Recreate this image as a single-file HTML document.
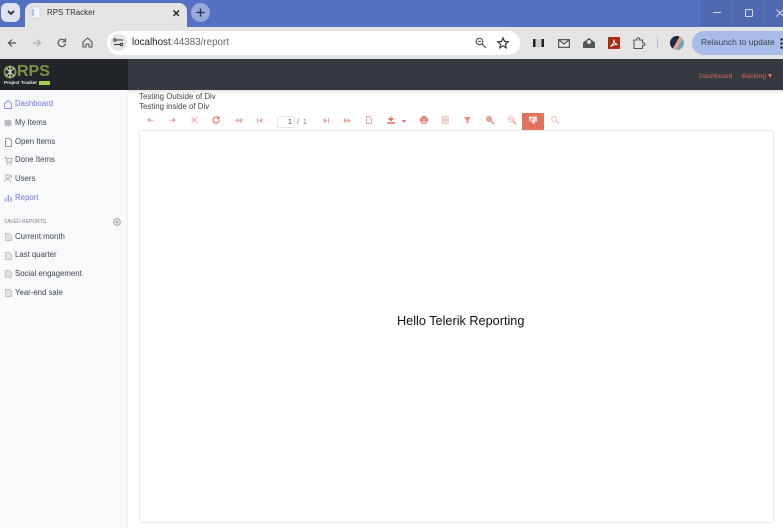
<!DOCTYPE html>
<html><head><meta charset="utf-8"><style>
html,body{margin:0;padding:0;background:#fff}
body{width:783px;height:528px;position:relative;overflow:hidden;font-family:"Liberation Sans",sans-serif}
#w{position:absolute;left:0;top:0;width:783px;height:528px;overflow:hidden;filter:blur(.35px)}
.a{position:absolute;white-space:nowrap}
.n{position:absolute;left:15px;font-size:7.8px;line-height:10px;color:#3f4650;white-space:nowrap}
.p{color:#6f74e8}
svg{position:absolute;overflow:visible}
</style></head><body><div id="w">
<!-- chrome -->
<div class="a" style="left:0;top:0;width:783px;height:27px;background:#5470c1"></div>
<div class="a" style="left:701px;top:0;width:82px;height:26px;background:#4f68b0"></div>
<div class="a" style="left:732px;top:0;width:1px;height:26px;background:#5d76bd"></div>
<div class="a" style="left:764px;top:0;width:1px;height:26px;background:#5d76bd"></div>
<div class="a" style="left:1px;top:3px;width:19px;height:19px;background:#dfe3f0;border-radius:6px"></div>
<svg style="left:7px;top:10px" width="8" height="6"><path d="M1 1l3 3 3-3" fill="none" stroke="#222" stroke-width="1.6"/></svg>
<div class="a" style="left:25px;top:3px;width:162px;height:24px;background:#e4e4e4;border-radius:8px 8px 0 0"></div>
<svg style="left:31px;top:7px" width="11" height="12"><rect x="0" y="0" width="9" height="11" fill="#f4f6fa" stroke="#c9d3e6"/><rect x="1" y="2" width="2" height="7" fill="#a9c4ea"/></svg>
<div class="a" style="left:47px;top:7px;font-size:7.9px;line-height:12px;color:#333">RPS TRacker</div>
<svg style="left:172px;top:9px" width="9" height="9"><path d="M1.500 1.500l5.500 5.500M7 1.500l-5.500 5.500" stroke="#222" stroke-width="1.400"/></svg>
<div class="a" style="left:191px;top:3px;width:19px;height:19px;background:#98a9da;border-radius:50%"></div>
<svg style="left:196px;top:8px" width="9" height="9"><path d="M4.500 .5v8M.5 4.500h8" stroke="#26304c" stroke-width="1.300"/></svg>
<div class="a" style="left:0;top:27px;width:783px;height:32px;background:#e4e4e4"></div>
<svg style="left:7px;top:38px" width="10" height="10"><path d="M9 5H1.500M5 1.500L1.500 5 5 8.500" fill="none" stroke="#555" stroke-width="1.200"/></svg>
<svg style="left:32px;top:38px" width="10" height="10"><path d="M1 5h7.500M5 1.500L8.500 5 5 8.500" fill="none" stroke="#aaa" stroke-width="1.200"/></svg>
<svg style="left:57px;top:38px" width="10" height="10"><path d="M8.500 5.500A3.700 3.700 0 1 1 7.500 2.300M8.500 .5v3h-3" fill="none" stroke="#555" stroke-width="1.200"/></svg>
<svg style="left:82px;top:37px" width="11" height="11"><path d="M1 5L5.500 1 10 5v5H7V7H4v3H1z" fill="none" stroke="#555" stroke-width="1.100"/></svg>
<div class="a" style="left:107px;top:31px;width:413px;height:24px;background:#fff;border-radius:12px"></div>
<div class="a" style="left:110px;top:34px;width:17px;height:17px;background:#e4e4e4;border-radius:50%"></div>
<svg style="left:113px;top:38px" width="11" height="9"><path d="M4 2h6M1 6.500h6" stroke="#333" stroke-width="1.100"/><circle cx="2" cy="2" r="1.300" fill="none" stroke="#333"/><circle cx="8.500" cy="6.500" r="1.300" fill="none" stroke="#333"/></svg>
<div class="a" style="left:132px;top:36px;font-size:9.8px;line-height:14px;color:#222">localhost<span style="color:#666">:44383/report</span></div>
<svg style="left:475px;top:37px" width="12" height="12"><circle cx="4.500" cy="4.500" r="3.300" fill="none" stroke="#555" stroke-width="1.200"/><path d="M7 7l4 4M3 4.500h3" stroke="#555" stroke-width="1.200"/></svg>
<svg style="left:497px;top:37px" width="12" height="12"><path d="M6 1l1.500 3.400 3.700.4-2.800 2.400.8 3.600L6 8.900l-3.200 1.900.8-3.600L.8 4.800l3.700-.4z" fill="none" stroke="#333" stroke-width="1.200"/></svg>
<div class="a" style="left:533px;top:39px;width:11px;height:8px;background:linear-gradient(90deg,#222 0 2.500px,#ccc 2.500px 8.500px,#222 8.500px)"></div>
<svg style="left:558px;top:39px" width="12" height="9"><path d="M.7.700h10.600v7.600H.7zM.7.700L6 5l5.300-4.300" fill="#eee" stroke="#444" stroke-width="1.100"/></svg>
<svg style="left:583px;top:37px" width="12" height="12"><path d="M0 5.500L6 1l6 4.500V11H0z" fill="#555"/><circle cx="6" cy="5" r="2" fill="#ddd"/></svg>
<div class="a" style="left:608px;top:37px;width:12px;height:12px;background:#ad2a12;border-radius:1px"></div>
<svg style="left:609px;top:38px" width="10" height="10"><path d="M1.500 8.500C4 6.500 5 3.500 5 1.500c0 3 1.500 4.500 3.500 5C6 6.500 3.500 7 1.500 8.500z" fill="none" stroke="#fff" stroke-width="1"/></svg>
<svg style="left:633px;top:37px" width="13" height="12"><path d="M1 3h3V1.500C4 .5 6.500 .5 6.500 1.500V3h3v3h1.500c1 0 1 2.500 0 2.500H9.500v3H1z" fill="none" stroke="#555" stroke-width="1.100"/></svg>
<div class="a" style="left:657px;top:37px;width:1px;height:11px;background:#aebbd8"></div>
<div class="a" style="left:670px;top:36px;width:14px;height:14px;border-radius:50%;background:linear-gradient(120deg,#1e2a44 0 45%,#d8a890 45% 65%,#6fa4b8 65%)"></div>
<div class="a" style="left:692px;top:31px;width:100px;height:24px;background:#a9bbe8;border-radius:12px"></div>
<div class="a" style="left:701px;top:36px;font-size:8.500px;line-height:13px;color:#3a4256">Relaunch to update</div>
<svg style="left:780px;top:38px" width="3" height="11"><circle cx="1.500" cy="1.500" r="1.200" fill="#222"/><circle cx="1.500" cy="5.500" r="1.200" fill="#222"/><circle cx="1.500" cy="9.500" r="1.200" fill="#222"/></svg>
<div class="a" style="left:713px;top:12px;width:8px;height:1px;background:#d5dcf0"></div>
<div class="a" style="left:745px;top:9px;width:6px;height:6px;border:1px solid #d5dcf0;border-radius:1px"></div>
<svg style="left:776px;top:9px" width="7" height="8"><path d="M.5.500l7 7M7.500.500l-7 7" stroke="#d5dcf0"/></svg>
<!-- app header -->
<div class="a" style="left:0;top:59px;width:783px;height:31px;background:#343a40"></div>
<div class="a" style="left:0;top:59px;width:128px;height:31px;background:#212529"></div>
<div class="a" style="left:0;top:90px;width:783px;height:4px;background:linear-gradient(#e2e2e2,#fff)"></div>
<svg style="left:3px;top:65px" width="14" height="14"><circle cx="7" cy="7" r="5.500" fill="none" stroke="#7d9248" stroke-width="2"/><path d="M3 3l8 8M11 3l-8 8M7 1v12" stroke="#d8dcd0" stroke-width="1.200"/></svg>
<div class="a" style="left:17px;top:63px;font-size:16px;line-height:18px;font-weight:bold;color:#7d9248">RPS</div>
<div class="a" style="left:4px;top:79px;font-size:4.600px;line-height:7px;font-weight:bold;color:#e8e8e8">Project Tracker</div>
<div class="a" style="left:39px;top:81px;width:11px;height:4px;background:#9fd048"></div>
<div class="a" style="left:699px;top:71.500px;font-size:6.800px;line-height:9px;color:#cf6a55">Dashboard</div>
<div class="a" style="left:742px;top:71.500px;font-size:6.800px;line-height:9px;color:#cf6a55">Backlog</div>
<div class="a" style="left:768px;top:73.500px;border:2.500px solid transparent;border-top:4px solid #e0705a;border-bottom:0"></div>
<!-- sidebar -->
<div class="a" style="left:0;top:90px;width:128px;height:438px;background:#f8f9fb;border-right:1px solid #eef0f3;box-sizing:border-box"></div>
<svg style="left:4px;top:100px" width="8" height="9"><path d="M.5 3.500L4 .5l3.500 3v5h-7z" fill="none" stroke="#8f94ee"/></svg>
<div class="n p" style="top:98.500px">Dashboard</div>
<svg style="left:4px;top:119px" width="8" height="8"><path d="M.5 1.500L4 .5l3.500 1v5L4 7.500.5 6.500z" fill="#b9bcc0"/></svg>
<div class="n" style="top:117.500px">My Items</div>
<svg style="left:5px;top:138px" width="7" height="9"><path d="M.5.500H4.500L6.500 2.500V8.500H.5z" fill="none" stroke="#999"/></svg>
<div class="n" style="top:136.500px">Open Items</div>
<svg style="left:4px;top:156px" width="9" height="9"><path d="M.5 1H2L3 6h4.500L8 2.500H2.500" fill="none" stroke="#aaa"/><circle cx="3.500" cy="7.800" r=".8" fill="#aaa"/><circle cx="7" cy="7.800" r=".8" fill="#aaa"/></svg>
<div class="n" style="top:154.500px">Done Items</div>
<svg style="left:4px;top:174px" width="9" height="8"><circle cx="3.500" cy="2.500" r="1.800" fill="none" stroke="#b0b0b0"/><path d="M.5 7.500c0-3 6-3 6 0M6 1c2 .5 2 2.500.5 3" fill="none" stroke="#b0b0b0"/></svg>
<div class="n" style="top:173.500px">Users</div>
<svg style="left:5px;top:194px" width="7" height="8"><path d="M.5 4v3.500M3.300 1v6.500M6 3v4.500" stroke="#8f94ee" stroke-width="1.300"/></svg>
<div class="n p" style="top:192.500px">Report</div>
<div class="a" style="left:4px;top:217.500px;font-size:5px;line-height:8px;color:#7a7f85">SAVED REPORTS</div>
<svg style="left:113px;top:217.500px" width="8" height="8"><circle cx="4" cy="4" r="3.300" fill="none" stroke="#888" stroke-width=".8"/><path d="M4 2.200v3.600M2.200 4h3.600" stroke="#888" stroke-width=".8"/></svg>
<svg style="left:5px;top:233px" width="7" height="8"><path d="M.5.500H4.500L6.500 2.500V7.500H.5z" fill="#e2e3e5" stroke="#b5b5b5" stroke-width=".7"/></svg>
<div class="n" style="top:232px">Current month</div>
<svg style="left:5px;top:252px" width="7" height="8"><path d="M.5.500H4.500L6.500 2.500V7.500H.5z" fill="#e2e3e5" stroke="#b5b5b5" stroke-width=".7"/></svg>
<div class="n" style="top:249.500px">Last quarter</div>
<svg style="left:5px;top:270px" width="7" height="8"><path d="M.5.500H4.500L6.500 2.500V7.500H.5z" fill="#e2e3e5" stroke="#b5b5b5" stroke-width=".7"/></svg>
<div class="n" style="top:268.500px">Social engagement</div>
<svg style="left:5px;top:289px" width="7" height="8"><path d="M.5.500H4.500L6.500 2.500V7.500H.5z" fill="#e2e3e5" stroke="#b5b5b5" stroke-width=".7"/></svg>
<div class="n" style="top:287.500px">Year-end sale</div>
<!-- content -->
<div class="a" style="left:139px;top:91.500px;font-size:7.900px;line-height:10px;color:#444">Testing Outside of Div</div>
<div class="a" style="left:139px;top:102px;font-size:7.900px;line-height:10px;color:#444">Testing inside of Div</div>
<!-- toolbar -->
<svg style="left:147px;top:117px" width="7" height="6"><path d="M7 4C5 2.500 3.500 2.500 3 2.500V.5L0 3l3 2.500V3.800c1.500 0 3 0 4 .2z" fill="#e8a598"/></svg>
<svg style="left:169px;top:117px" width="7" height="6"><path d="M0 4C2 2.500 3.500 2.500 4 2.500V.5L7 3 4 5.500V3.800c-1.500 0-3 0-4 .2z" fill="#e8a598"/></svg>
<svg style="left:191px;top:117px" width="6" height="6"><path d="M.5.500l5 5M5.500.500l-5 5" stroke="#e8a598"/></svg>
<svg style="left:212px;top:116px" width="8" height="8"><path d="M6.800 2.200A3.200 3.200 0 1 0 7.300 4.500M7 .5v2.200H4.800" fill="none" stroke="#df6f5c" stroke-width="1.100"/></svg>
<svg style="left:235px;top:118px" width="7" height="5"><path d="M3.500 0v5L0 2.500zM7 0v5L3.500 2.500z" fill="#eba99d"/></svg>
<svg style="left:257px;top:118px" width="6" height="5"><path d="M.5 0v5" stroke="#eba99d"/><path d="M5.500 0v5L1.500 2.500z" fill="#eba99d"/></svg>
<div class="a" style="left:277px;top:116px;width:16px;height:10px;border:1px solid #e6e6e6;border-radius:2px;box-sizing:content-box"></div>
<div class="a" style="left:288px;top:117.500px;font-size:7px;line-height:9px;color:#444">1</div>
<div class="a" style="left:297px;top:117.500px;font-size:7px;line-height:9px;color:#777">/&nbsp;&nbsp;1</div>
<svg style="left:323px;top:118px" width="6" height="5"><path d="M5.500 0v5" stroke="#eba99d"/><path d="M.5 0v5L4.500 2.500z" fill="#eba99d"/></svg>
<svg style="left:344px;top:118px" width="7" height="5"><path d="M0 0v5L3.500 2.500zM3.500 0v5L7 2.500z" fill="#eba99d"/></svg>
<svg style="left:366px;top:116px" width="6" height="8"><path d="M.5.500H3.500L5.500 2.500V7.500H.5z" fill="none" stroke="#eba99d"/></svg>
<svg style="left:387px;top:116px" width="8" height="8"><path d="M4 0v3.500M1.800 2.500L4 5l2.200-2.500z" fill="#df6f5c" stroke="#df6f5c" stroke-width=".8"/><path d="M0 7h8" stroke="#df6f5c" stroke-width="1.500"/></svg>
<div class="a" style="left:401.500px;top:120px;border:2px solid transparent;border-top:3px solid #df6f5c;border-bottom:0"></div>
<svg style="left:420px;top:116px" width="8" height="8"><path d="M2 2.500V.5h4v2M2 5.500H.5v-3h7v3H6" fill="#eaa194" stroke="#df6f5c" stroke-width=".8"/><path d="M2 5h4v2.500H2z" fill="#fff" stroke="#df6f5c" stroke-width=".8"/></svg>
<svg style="left:442px;top:116px" width="7" height="8"><rect x=".5" y=".5" width="6" height="7" rx="1" fill="#f6dcd7" stroke="#eec0b8" stroke-width=".8"/><path d="M2 4h3" stroke="#e8a598"/></svg>
<svg style="left:464px;top:117px" width="7" height="6"><path d="M0 0h7L4.500 3v3H2.500V3z" fill="#e88c7c"/></svg>
<svg style="left:486px;top:116px" width="8" height="8"><circle cx="3" cy="3" r="2.500" fill="#e8a598" stroke="#df7f6e" stroke-width=".7"/><path d="M5 5l3 3" stroke="#df6f5c" stroke-width="1.200"/></svg>
<svg style="left:508px;top:116px" width="8" height="8"><circle cx="3" cy="3" r="2.400" fill="none" stroke="#e8a598" stroke-width=".8"/><path d="M1.500 3h3" stroke="#e8a598" stroke-width=".8"/><path d="M5 5l3 3" stroke="#df7f6e" stroke-width="1.200"/></svg>
<div class="a" style="left:522px;top:113px;width:22px;height:17px;background:#e2725b"></div>
<svg style="left:529px;top:116px" width="9" height="8"><path d="M0 .5h8v5H0z" fill="#fbe6e2"/><path d="M3 5.500h3v2H3z" fill="#fbe6e2"/><path d="M1 5l3-3" stroke="#e2725b"/></svg>
<svg style="left:551px;top:116px" width="8" height="8"><circle cx="3" cy="3" r="2.400" fill="none" stroke="#eeb4a9" stroke-width=".9"/><path d="M5 5l3 3" stroke="#eeb4a9" stroke-width="1.200"/></svg>
<!-- report card -->
<div class="a" style="left:139px;top:130px;width:635px;height:393px;border:1px solid #e9e9e9;border-radius:3px;box-sizing:border-box;background:#fff"></div>
<div class="a" style="left:397px;top:313.500px;font-size:12.700px;line-height:15px;color:#111">Hello Telerik Reporting</div>
</div></body></html>
